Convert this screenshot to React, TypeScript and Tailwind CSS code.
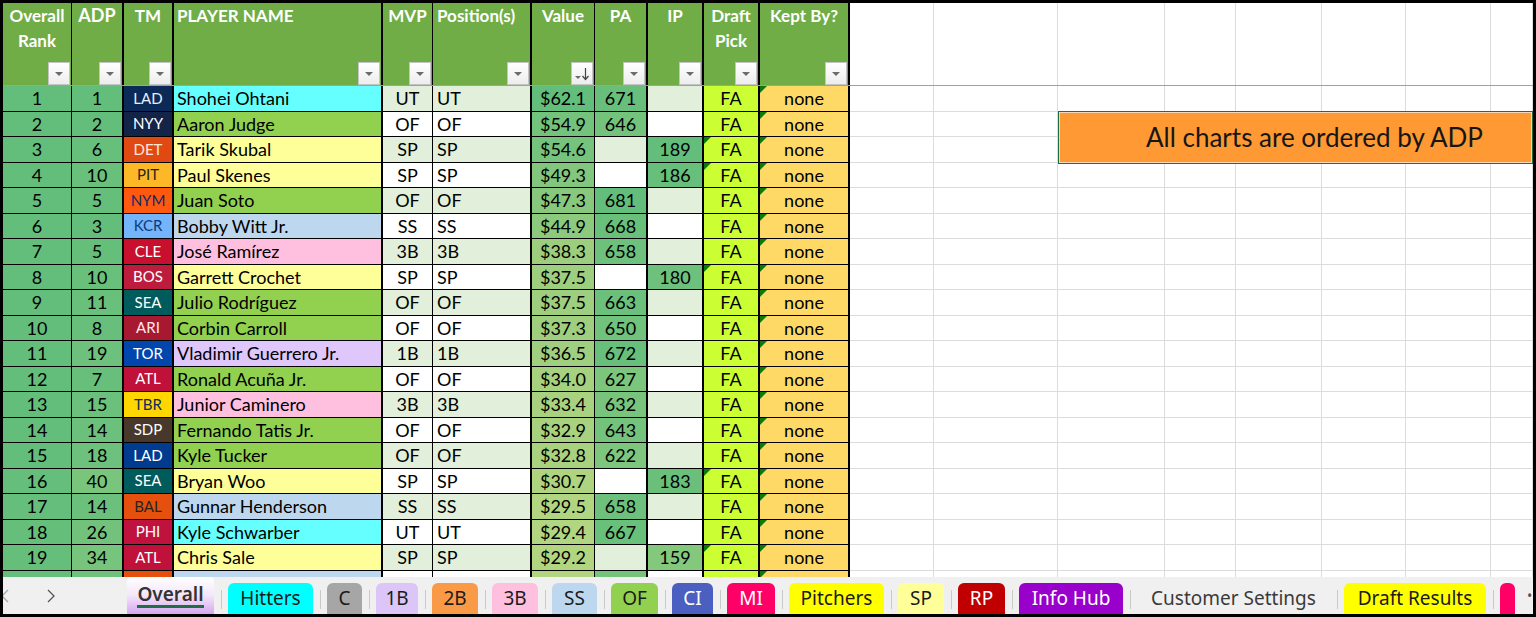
import React from 'react';

type Row = {
  rank: number;
  adp: number;
  tm: string;
  name: string;
  pos: string;
  value: number;
  pa?: number;
  ip?: number;
  tmAlt?: boolean;
  cut?: boolean;
};

const rows: Row[] = [
  { rank: 1, adp: 1, tm: 'LAD', name: 'Shohei Ohtani', pos: 'UT', value: 62.1, pa: 671 },
  { rank: 2, adp: 2, tm: 'NYY', name: 'Aaron Judge', pos: 'OF', value: 54.9, pa: 646 },
  { rank: 3, adp: 6, tm: 'DET', name: 'Tarik Skubal', pos: 'SP', value: 54.6, ip: 189 },
  { rank: 4, adp: 10, tm: 'PIT', name: 'Paul Skenes', pos: 'SP', value: 49.3, ip: 186 },
  { rank: 5, adp: 5, tm: 'NYM', name: 'Juan Soto', pos: 'OF', value: 47.3, pa: 681 },
  { rank: 6, adp: 3, tm: 'KCR', name: 'Bobby Witt Jr.', pos: 'SS', value: 44.9, pa: 668 },
  { rank: 7, adp: 5, tm: 'CLE', name: 'José Ramírez', pos: '3B', value: 38.3, pa: 658 },
  { rank: 8, adp: 10, tm: 'BOS', name: 'Garrett Crochet', pos: 'SP', value: 37.5, ip: 180 },
  { rank: 9, adp: 11, tm: 'SEA', name: 'Julio Rodríguez', pos: 'OF', value: 37.5, pa: 663 },
  { rank: 10, adp: 8, tm: 'ARI', name: 'Corbin Carroll', pos: 'OF', value: 37.3, pa: 650 },
  { rank: 11, adp: 19, tm: 'TOR', name: 'Vladimir Guerrero Jr.', pos: '1B', value: 36.5, pa: 672 },
  { rank: 12, adp: 7, tm: 'ATL', name: 'Ronald Acuña Jr.', pos: 'OF', value: 34.0, pa: 627 },
  { rank: 13, adp: 15, tm: 'TBR', name: 'Junior Caminero', pos: '3B', value: 33.4, pa: 632 },
  { rank: 14, adp: 14, tm: 'SDP', name: 'Fernando Tatis Jr.', pos: 'OF', value: 32.9, pa: 643 },
  { rank: 15, adp: 18, tm: 'LAD', name: 'Kyle Tucker', pos: 'OF', value: 32.8, pa: 622, tmAlt: true },
  { rank: 16, adp: 40, tm: 'SEA', name: 'Bryan Woo', pos: 'SP', value: 30.7, ip: 183 },
  { rank: 17, adp: 14, tm: 'BAL', name: 'Gunnar Henderson', pos: 'SS', value: 29.5, pa: 658 },
  { rank: 18, adp: 26, tm: 'PHI', name: 'Kyle Schwarber', pos: 'UT', value: 29.4, pa: 667 },
  { rank: 19, adp: 34, tm: 'ATL', name: 'Chris Sale', pos: 'SP', value: 29.2, ip: 159 },
  // only the top edge of this row shows above the tabs
  { rank: 20, adp: 21, tm: 'BAL', name: '', pos: 'SS', value: 28.8, pa: 640, cut: true },
];

// team cell colours
const teamClass: Record<string, string> = {
  LAD: 'bg-[#0c2a58] text-[#e8eefc]',
  LAD2: 'bg-[#003b8f] text-white',
  NYY: 'bg-[#132448] text-white',
  DET: 'bg-[#e04a12] text-[#ffe6dc]',
  PIT: 'bg-[#fdb827] text-[#27251f]',
  NYM: 'bg-[#ff5910] text-[#0a2a6e]',
  KCR: 'bg-[#74b4fa] text-[#0b3c7a]',
  CLE: 'bg-[#c8102e] text-white',
  BOS: 'bg-[#bd1c3c] text-white',
  SEA: 'bg-[#005c5c] text-white',
  ARI: 'bg-[#a71930] text-[#ffe8ec]',
  TOR: 'bg-[#0046ad] text-white',
  ATL: 'bg-[#c0113a] text-white',
  TBR: 'bg-[#ffd600] text-[#0a2a5c]',
  SDP: 'bg-[#47382b] text-white',
  BAL: 'bg-[#e5500f] text-[#27251f]',
  PHI: 'bg-[#c0123e] text-white',
};

const posClass: Record<string, string> = {
  UT: 'bg-[#66ffff]',
  OF: 'bg-[#92d050]',
  SP: 'bg-[#ffff99]',
  SS: 'bg-[#bdd7ee]',
  '3B': 'bg-[#ffbfdf]',
  '1B': 'bg-[#dfc6fb]',
};

// excel style green -> yellow colour scale
function scale(t: number) {
  const k = Math.max(0, Math.min(1, t));
  const a = [99, 190, 123];
  const b = [255, 235, 132];
  const c = a.map((v, i) => Math.round(v + (b[i] - v) * k));
  return `rgb(${c[0]},${c[1]},${c[2]})`;
}

const cellFont = { fontFamily: 'Lato, "Liberation Sans", sans-serif' };

function FilterBtn({ sort }: { sort?: boolean }) {
  return (
    <div className="mt-auto self-end mr-[1px] w-[22px] h-[23px] shrink-0 bg-gradient-to-b from-white to-[#ededed] border border-[#c4c4c4] flex items-center justify-center">
      {sort ? (
        <svg width="18" height="16" viewBox="0 0 18 16">
          <path d="M2 10 L8 10 L5 13 Z" fill="#6b6b6b" />
          <path d="M12.5 2 V13" stroke="#444" strokeWidth="1.2" />
          <path d="M9.5 10 L12.5 13.5 L15.5 10" stroke="#444" strokeWidth="1.2" fill="none" />
        </svg>
      ) : (
        <svg width="10" height="6" viewBox="0 0 10 6">
          <path d="M1 1 L9 1 L5 5 Z" fill="#6b6b6b" />
        </svg>
      )}
    </div>
  );
}

const heads = [
  { l: ['Overall', 'Rank'], w: 'w-[69px] border-r', a: 'text-center' },
  { l: ['ADP'], w: 'w-[52px] border-r-2', a: 'text-center text-[18px]' },
  { l: ['TM'], w: 'w-[50px] border-r-2', a: 'text-center' },
  { l: ['PLAYER NAME'], w: 'w-[209px] border-r-2', a: 'text-left pl-[3px]' },
  { l: ['MVP'], w: 'w-[50px] border-r', a: 'text-center' },
  { l: ['Position(s)'], w: 'w-[99px] border-r-2', a: 'text-left pl-[4px]' },
  { l: ['Value'], w: 'w-[63px] border-r', a: 'text-center', sort: true },
  { l: ['PA'], w: 'w-[53px] border-r-2', a: 'text-center' },
  { l: ['IP'], w: 'w-[56px] border-r-2', a: 'text-center' },
  { l: ['Draft', 'Pick'], w: 'w-[56px] border-r-2', a: 'text-center' },
  { l: ['Kept By?'], w: 'w-[90px] border-r-2', a: 'text-center' },
];

const rightCols = ['w-[84px]', 'w-[124px]', 'w-[107px]', 'w-[71px]', 'w-[86px]', 'w-[84px]', 'w-[85px]', 'flex-1'];

function Flag() {
  return <div className="absolute left-0 top-0 w-0 h-0 border-t-[7px] border-r-[7px] border-t-[#0a7a0a] border-r-transparent" />;
}

function DataRow({ r, i }: { r: Row; i: number }) {
  const band = i % 2 === 0 ? 'bg-[#e2efda]' : 'bg-white';
  const base = 'h-full border-b border-black border-solid flex items-center';
  const show = !r.cut;
  return (
    <div className="flex shrink-0 h-[25.5px] text-[18px] text-black leading-none" style={cellFont}>
      <div className={`${base} w-[69px] border-r justify-center`} style={{ background: scale((r.rank - 1) / 1500) }}>
        {show && r.rank}
      </div>
      <div className={`${base} w-[52px] border-r-2 justify-center`} style={{ background: scale((r.adp - 1) / 260) }}>
        {show && r.adp}
      </div>
      <div className={`${base} w-[50px] border-r-2 justify-center text-[15px] ${teamClass[r.tmAlt ? 'LAD2' : r.tm]}`}>
        {show && r.tm}
      </div>
      <div className={`${base} w-[209px] border-r-2 pl-[3px] ${posClass[r.pos]}`}>{show && r.name}</div>
      <div className={`${base} w-[50px] border-r justify-center ${band}`}>{show && r.pos}</div>
      <div className={`${base} w-[99px] border-r-2 pl-[4px] ${band}`}>{show && r.pos}</div>
      <div className={`${base} w-[63px] border-r justify-center`} style={{ background: scale((62.1 - r.value) / 65) }}>
        {show && `$${r.value.toFixed(1)}`}
      </div>
      {r.pa ? (
        <div className={`${base} w-[53px] border-r-2 justify-center`} style={{ background: scale((681 - r.pa) / 340) }}>
          {show && r.pa}
        </div>
      ) : (
        <div className={`${base} w-[53px] border-r-2 ${band}`} />
      )}
      {r.ip ? (
        <div className={`${base} w-[56px] border-r-2 justify-center`} style={{ background: scale((189 - r.ip) / 140) }}>
          {show && r.ip}
        </div>
      ) : (
        <div className={`${base} w-[56px] border-r-2 ${band}`} />
      )}
      <div className={`${base} relative w-[56px] border-r-2 justify-center bg-[#ccff33]`}>
        {r.ip ? <Flag /> : null}
        {show && 'FA'}
      </div>
      <div className={`${base} relative w-[90px] border-r-2 justify-center bg-[#ffd966]`}>
        <Flag />
        {show && 'none'}
      </div>
    </div>
  );
}

const tabs = [
  { t: 'Hitters', c: 'w-[85px] bg-[#00ffff] text-[#1a1a1a]' },
  { t: 'C', c: 'w-[35px] bg-[#a6a6a6] text-[#1a1a1a]' },
  { t: '1B', c: 'w-[42px] bg-[#dcc6f8] text-[#1a1a1a]' },
  { t: '2B', c: 'w-[46px] bg-[#fb9a46] text-[#1a1a1a]' },
  { t: '3B', c: 'w-[46px] bg-[#ffc0e0] text-[#1a1a1a]' },
  { t: 'SS', c: 'w-[45px] bg-[#bdd7ee] text-[#1a1a1a]' },
  { t: 'OF', c: 'w-[47px] bg-[#92d050] text-[#1a1a1a]' },
  { t: 'CI', c: 'w-[41px] bg-[#4a5fc0] text-white' },
  { t: 'MI', c: 'w-[48px] bg-[#ff0066] text-white' },
  { t: 'Pitchers', c: 'w-[95px] bg-[#ffff00] text-[#1a1a1a]' },
  { t: 'SP', c: 'w-[46px] bg-[#ffff99] text-[#1a1a1a]' },
  { t: 'RP', c: 'w-[47px] bg-[#c00000] text-white' },
  { t: 'Info Hub', c: 'w-[104px] bg-[#9900cc] text-white' },
  { t: 'Customer Settings', c: 'w-[193px] text-[#3a3a3a]' },
  { t: 'Draft Results', c: 'w-[142px] bg-[#ffff00] text-[#1a1a1a]' },
  { t: '', c: 'w-[15px] bg-[#ff0066]' },
];

function Sep() {
  return <div className="w-px mx-[6.5px] mt-[13px] mb-[5px] bg-[#c9c9c9] shrink-0" />;
}

export default function App() {
  return (
    <div className="w-[1536px] h-[617px] bg-black p-[3px] overflow-hidden">
      <div className="w-full h-full bg-white flex flex-col overflow-hidden">
        {/* sheet area */}
        <div className="h-[574px] shrink-0 flex overflow-hidden">
          <div className="w-[847px] shrink-0 flex flex-col">
            <div className="flex shrink-0 h-[82px] bg-[#70ad47] text-white font-bold text-[17px] leading-[25px]" style={cellFont}>
              {heads.map((h) => (
                <div key={h.l.join()} className={`${h.w} border-black h-full flex flex-col ${h.a}`}>
                  {h.l.map((x) => (
                    <div key={x}>{x}</div>
                  ))}
                  <FilterBtn sort={h.sort} />
                </div>
              ))}
            </div>
            <div className="h-px shrink-0 bg-[#a0a0a0]" />
            {rows.map((r, i) => (
              <DataRow key={r.rank} r={r} i={i} />
            ))}
          </div>

          {/* empty grid to the right */}
          <div className="flex-1 flex flex-col">
            <div className="flex shrink-0 h-[82px]">
              {rightCols.map((w, i) => (
                <div key={i} className={`${w} h-full border-r border-[#dcdcdc]`} />
              ))}
            </div>
            <div className="h-px shrink-0 bg-[#a0a0a0]" />
            <div className="grid shrink-0 grid-cols-[84px_124px_107px_71px_86px_84px_85px_1fr] grid-rows-[repeat(20,25.5px)]">
              {Array.from({ length: 20 }).flatMap((_, ri) =>
                rightCols.map((_, ci) => {
                  if ((ri === 1 || ri === 2) && ci >= 2) return null;
                  return (
                    <div
                      key={`${ri}-${ci}`}
                      className="border-r border-b border-[#dcdcdc]"
                      style={{ gridRow: ri + 1, gridColumn: ci + 1 }}
                    />
                  );
                })
              )}
              <div className="col-start-3 col-end-9 row-start-2 row-end-4 border border-[#1f6e43] -mt-[1px] -mb-[1px]">
                <div className="h-full w-full border border-[#f6d9b8] bg-[#ff9933] flex items-center justify-center pl-[38px] text-[26px] text-[#161616]" style={cellFont}>
                  <span className="whitespace-nowrap">All charts are ordered by ADP</span>
                </div>
              </div>
            </div>
          </div>
        </div>

        {/* sheet tabs */}
        <div className="h-[37px] shrink-0 bg-[#f0f0f0] flex text-[19px]" style={{ fontFamily: '"Noto Sans", "Open Sans", sans-serif' }}>
          <div className="w-[124px] shrink-0 flex items-center">
            <svg width="8" height="14" viewBox="0 0 8 14" className="ml-[-2px]">
              <path d="M7 1 L1 7 L7 13" stroke="#a8a8a8" strokeWidth="1.3" fill="none" />
            </svg>
            <svg width="8" height="14" viewBox="0 0 8 14" className="ml-[38px]">
              <path d="M1 1 L7 7 L1 13" stroke="#555" strokeWidth="1.3" fill="none" />
            </svg>
          </div>
          <div className="w-[87px] shrink-0 h-full rounded-t-[4px] bg-gradient-to-b from-white via-[#f3e6fa] to-[#d6a6ee] flex items-center justify-center">
            <span className="font-semibold text-[#333] leading-[22px] border-b-[3px] border-[#1d7044]">Overall</span>
          </div>
          {tabs.map((t) => (
            <React.Fragment key={t.t + t.c}>
              <Sep />
              <div className={`${t.c} shrink-0 mt-[6px] rounded-t-[6px] flex items-center justify-center pb-[1px] whitespace-nowrap`}>
                {t.t}
              </div>
            </React.Fragment>
          ))}
          <div className="ml-[12px] flex items-center text-[#555] text-[14px]">•</div>
        </div>
      </div>
    </div>
  );
}
